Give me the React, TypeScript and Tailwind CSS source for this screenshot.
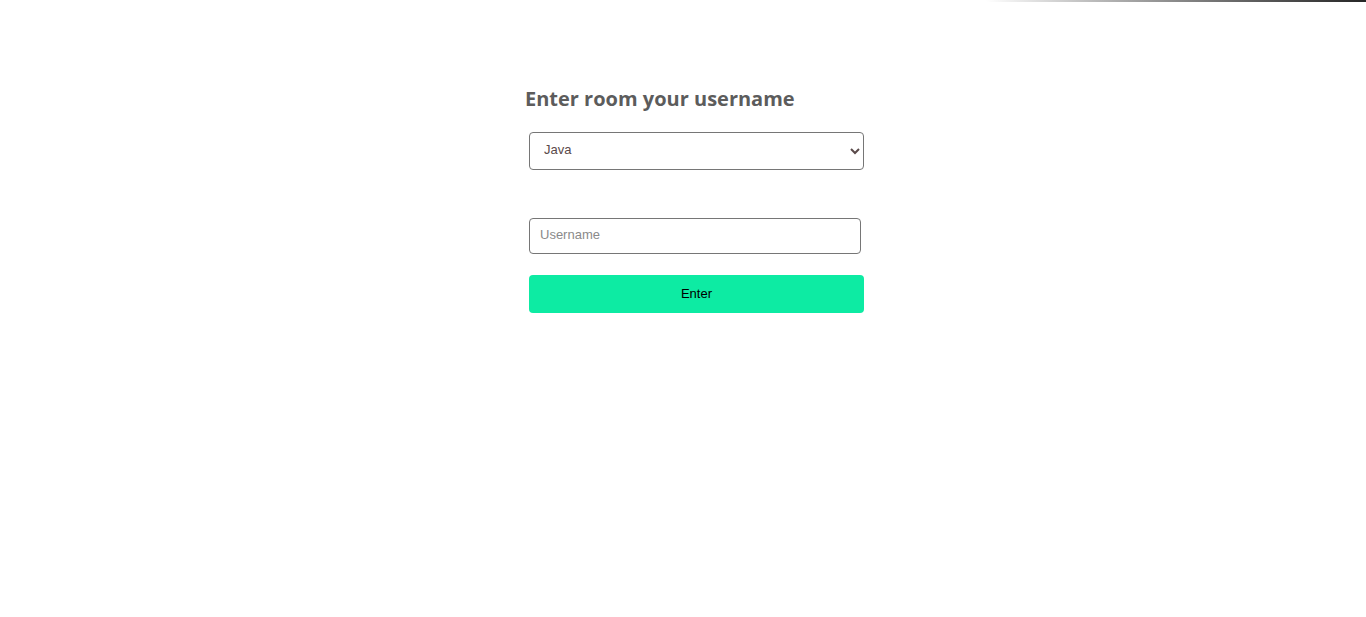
import React, { useState } from 'react';

const rooms = ['Java', 'Python', 'JavaScript', 'C++'];

const App = () => {
    const [room, setRoom] = useState('Java');
    const [username, setUsername] = useState('');

    return (
        <div className="relative w-full min-h-[617px] bg-white font-['Liberation_Sans',Arial,sans-serif]">
            {/* top edge shading */}
            <div className="absolute top-0 right-0 w-[380px] h-[2px] bg-gradient-to-r from-white via-[#8a8a8a] to-[#262626]" />

            <div className="flex justify-center pl-[32px] pt-[85px]">
                <div className="w-[340px] flex flex-col">
                    <h2 className="text-[20px] leading-[28px] font-bold text-[#5c5c5c] font-['Open_Sans',sans-serif] -ml-[4px]">
                        Enter room your username
                    </h2>

                    <select
                        value={room}
                        onChange={(e) => setRoom(e.target.value)}
                        className="mt-[19px] h-[38px] w-[335px] border border-[#767676] rounded-[4px] pl-[10px] pr-2 pb-[3px] text-[13px] text-[#5a4a4a] bg-white focus:outline-none"
                    >
                        {rooms.map((r) => (
                            <option key={r} value={r}>{r}</option>
                        ))}
                    </select>

                    <input
                        value={username}
                        onChange={(e) => setUsername(e.target.value)}
                        placeholder="Username"
                        className="mt-[48px] h-[36px] w-[332px] border border-[#767676] rounded-[4px] px-[10px] pb-[3px] text-[13px] text-black placeholder:text-[#8a8a8a] focus:outline-none"
                    />

                    <button className="mt-[21px] h-[38px] w-[335px] bg-[#0deba3] rounded-[4px] text-[13px] text-black">
                        Enter
                    </button>
                </div>
            </div>
        </div>
    );
};

export default App;
